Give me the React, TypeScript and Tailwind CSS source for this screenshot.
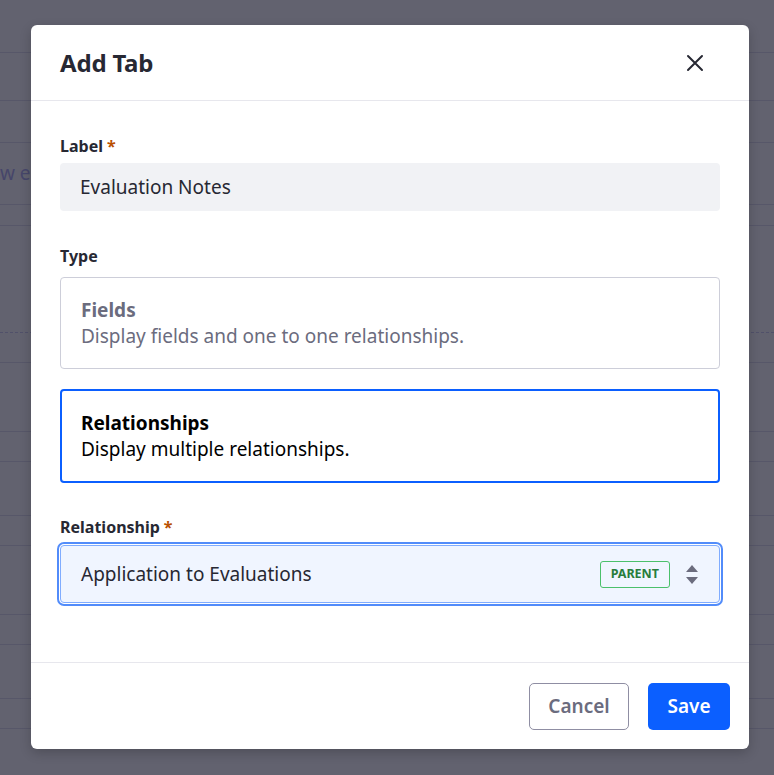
import React from "react";

const font = { fontFamily: '"Noto Sans", "Open Sans", sans-serif' };

// faint rows of the page behind the overlay
const BgRow = ({ h, dashed, children }: { h: number; dashed?: boolean; children?: React.ReactNode }) => (
  <div
    className={`flex items-center overflow-hidden ${dashed ? "border-b border-dashed border-[#51516a]" : "border-b border-[#575769]"}`}
    style={{ height: h }}
  >
    {children}
  </div>
);

const Label = ({ text, required }: { text: string; required?: boolean }) => (
  <div className="text-[16px] leading-5 font-bold text-[#272833]">
    {text}
    {required && <span className="ml-1 text-[#b95000]">*</span>}
  </div>
);

export default function App() {
  return (
    <div className="relative w-full h-[775px] overflow-hidden bg-[#62626f]" style={font}>
      {/* page behind */}
      <div className="flex flex-col">
        <BgRow h={53} />
        <BgRow h={48} />
        <BgRow h={42} />
        <BgRow h={62}>
          <span className="text-[19px] text-[#46466a] whitespace-nowrap">w entries</span>
        </BgRow>
        <BgRow h={21} />
        <BgRow h={107} dashed />
        <BgRow h={30} />
        <BgRow h={69} />
        <BgRow h={30} />
        <BgRow h={54} />
        <BgRow h={30} />
        <BgRow h={69} />
        <BgRow h={30} />
        <BgRow h={54} />
        <BgRow h={30} />
      </div>

      {/* modal */}
      <div className="absolute left-[31px] top-[25px] w-[718px] h-[724px] bg-white rounded-md shadow-[0_4px_12px_rgba(0,0,0,0.2)] flex flex-col">
        <div className="h-[76px] flex items-center justify-between pl-[29px] pr-[45px] border-b border-[#e7e7ed]">
          <h2 className="text-[24px] font-bold text-[#272833] tracking-[-0.2px]">Add Tab</h2>
          <svg width="18" height="18" viewBox="0 0 18 18" fill="none" stroke="#272833" strokeWidth="2" strokeLinecap="round">
            <path d="M2 2L16 16M16 2L2 16" />
          </svg>
        </div>

        <div className="flex-1 px-[29px] pt-[35px]">
          <Label text="Label" required />
          <div className="mt-[7px] h-[48px] rounded-[4px] bg-[#f1f2f5] flex items-center px-5 text-[19px] text-[#272833]">
            Evaluation Notes
          </div>

          <div className="mt-[35px]">
            <Label text="Type" />
          </div>
          <div className="mt-[11px] h-[92px] rounded-[4px] border border-[#cdced9] flex flex-col justify-center px-5">
            <div className="text-[19px] leading-[26px] font-bold text-[#6b6c7e]">Fields</div>
            <div className="text-[19px] leading-[26px] text-[#6b6c7e]">Display fields and one to one relationships.</div>
          </div>
          <div className="mt-[20px] h-[94px] rounded-[4px] border-2 border-[#0b5fff] flex flex-col justify-center px-[19px]">
            <div className="text-[19px] leading-[26px] font-bold text-black">Relationships</div>
            <div className="text-[19px] leading-[26px] text-black">Display multiple relationships.</div>
          </div>

          <div className="mt-[34px]">
            <Label text="Relationship" required />
          </div>
          <div className="mt-[8px] h-[58px] rounded-[4px] border border-[#80acff] bg-[#f0f5ff] shadow-[0_0_0_1px_#fff,0_0_0_3px_#528cfa] flex items-center pl-5 pr-5">
            <span className="flex-1 text-[19px] text-[#272833]">Application to Evaluations</span>
            <span className="h-[27px] px-[10px] rounded-[3px] border border-[#4bc06b] flex items-center text-[12.5px] font-bold text-[#287d3c]">
              PARENT
            </span>
            <svg className="ml-[15px]" width="14" height="21" viewBox="0 0 14 21" fill="#6b6c7e">
              <path d="M7 1L13 8H1Z" />
              <path d="M7 20L13 13H1Z" />
            </svg>
          </div>
        </div>

        <div className="h-[87px] border-t border-[#e7e7ed] flex items-center justify-end gap-[19px] pr-[19px]">
          <button className="h-[47px] w-[100px] rounded-[5px] border border-[#8f8ea3] text-[19px] font-semibold text-[#6b6c7e] bg-white">
            Cancel
          </button>
          <button className="h-[47px] w-[82px] rounded-[5px] bg-[#0b5fff] text-[19px] font-semibold text-white">
            Save
          </button>
        </div>
      </div>
    </div>
  );
}
